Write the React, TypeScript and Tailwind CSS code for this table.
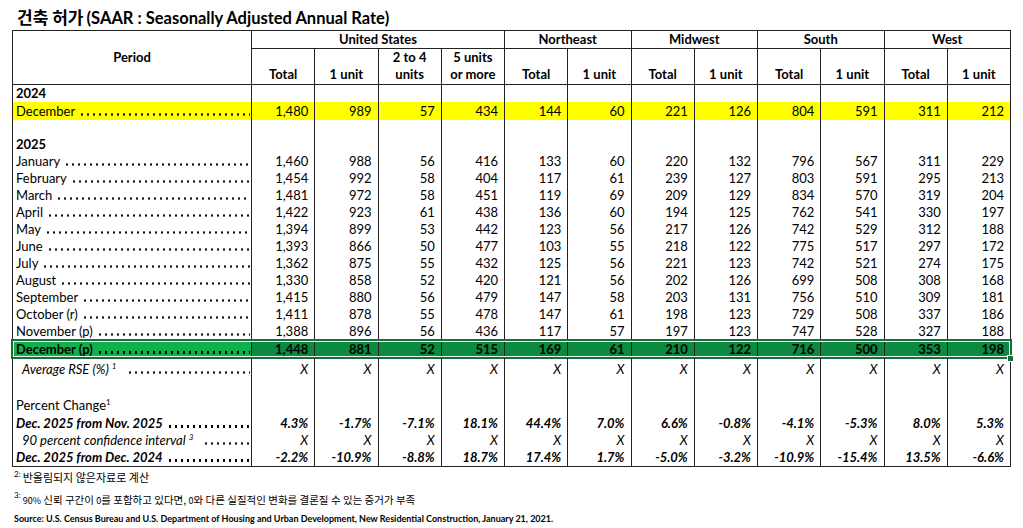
import React from "react";

type RowKind = "normal" | "yellow" | "green";

const months: [string, string[]][] = [
  ["January", ["1,460", "988", "56", "416", "133", "60", "220", "132", "796", "567", "311", "229"]],
  ["February", ["1,454", "992", "58", "404", "117", "61", "239", "127", "803", "591", "295", "213"]],
  ["March", ["1,481", "972", "58", "451", "119", "69", "209", "129", "834", "570", "319", "204"]],
  ["April", ["1,422", "923", "61", "438", "136", "60", "194", "125", "762", "541", "330", "197"]],
  ["May", ["1,394", "899", "53", "442", "123", "56", "217", "126", "742", "529", "312", "188"]],
  ["June", ["1,393", "866", "50", "477", "103", "55", "218", "122", "775", "517", "297", "172"]],
  ["July", ["1,362", "875", "55", "432", "125", "56", "221", "123", "742", "521", "274", "175"]],
  ["August", ["1,330", "858", "52", "420", "121", "56", "202", "126", "699", "508", "308", "168"]],
  ["September", ["1,415", "880", "56", "479", "147", "58", "203", "131", "756", "510", "309", "181"]],
  ["October (r)", ["1,411", "878", "55", "478", "147", "61", "198", "123", "729", "508", "337", "186"]],
  ["November (p)", ["1,388", "896", "56", "436", "117", "57", "197", "123", "747", "528", "327", "188"]],
];

const X12 = Array(12).fill("X");
const empty12 = Array(12).fill("");

function Dots({ bold = false }: { bold?: boolean }) {
  return (
    <span
      className={`flex-1 min-w-0 h-[3px] ml-[4px] bg-repeat-x bg-left ${
        bold
          ? "bg-[radial-gradient(circle,#000_1.2px,transparent_1.5px)] bg-[length:6px_3px]"
          : "bg-[radial-gradient(circle,#111_1px,transparent_1.3px)] bg-[length:6px_3px]"
      }`}
    />
  );
}

function Cells({
  values,
  cellClass = "",
  textClass = "",
}: {
  values: string[];
  cellClass?: string;
  textClass?: string;
}) {
  return (
    <div className="grid grid-cols-12 flex-1 h-full">
      {values.map((v, i) => (
        <div
          key={i}
          className={`border-l border-[#222] h-full flex items-center justify-end pr-[6px] ${cellClass} ${textClass}`}
        >
          {v}
        </div>
      ))}
    </div>
  );
}

function Row({
  h,
  label,
  values,
  kind = "normal",
  textClass = "",
}: {
  h: string;
  label: React.ReactNode;
  values: string[];
  kind?: RowKind;
  textClass?: string;
}) {
  const periodBg =
    kind === "yellow" ? "bg-[#ffff00]" : kind === "green" ? "bg-[#10b04c]" : "";
  const cellBg =
    kind === "yellow" ? "bg-[#ffff00]" : kind === "green" ? "bg-[#0b8a40]" : "";
  return (
    <div className={`flex ${h} relative`}>
      <div className={`w-[238px] shrink-0 h-full flex items-center pl-[3px] pr-[1px] ${periodBg}`}>
        {label}
      </div>
      <Cells values={values} cellClass={cellBg} textClass={textClass} />
      {kind === "green" && (
        <>
          <div className="absolute -left-[2px] -right-[2px] -top-[1px] -bottom-[1px] border-2 border-[#1d6b3c] shadow-[inset_0_0_0_1px_#e8f5ec] pointer-events-none" />
          <div className="absolute -right-[4px] -bottom-[4px] w-[7px] h-[7px] bg-[#1d6b3c] border border-white" />
        </>
      )}
    </div>
  );
}

function Label({
  text,
  className = "",
  bold = false,
}: {
  text: React.ReactNode;
  className?: string;
  bold?: boolean;
}) {
  return (
    <div className={`flex w-full items-baseline ${className}`}>
      <span className="whitespace-nowrap">{text}</span>
      <Dots bold={bold} />
    </div>
  );
}

export default function App() {
  const subHeads: React.ReactNode[] = [
    "Total",
    "1 unit",
    <>
      2 to 4
      <br />
      units
    </>,
    <>
      5 units
      <br />
      or more
    </>,
    "Total",
    "1 unit",
    "Total",
    "1 unit",
    "Total",
    "1 unit",
    "Total",
    "1 unit",
  ];
  const groups: [string, string][] = [
    ["United States", "col-span-4"],
    ["Northeast", "col-span-2"],
    ["Midwest", "col-span-2"],
    ["South", "col-span-2"],
    ["West", "col-span-2"],
  ];

  return (
    <div className="w-[1023px] h-[528px] bg-white text-black overflow-hidden font-[family-name:Lato,'Noto_Sans_CJK_KR',sans-serif] text-[13px] leading-none">
      {/* Title */}
      <div className="h-[30px] pl-[17px] pt-[8px] font-bold whitespace-nowrap leading-[18px]">
        <span className="font-[family-name:'Noto_Sans_CJK_KR',sans-serif] text-[17px]">건축 허가</span>{" "}
        <span className="text-[16.5px]">(SAAR : Seasonally Adjusted Annual Rate)</span>
      </div>

      {/* Table */}
      <div className="ml-[12px] w-[999px] border border-[#222]">
        {/* Header */}
        <div className="flex h-[54px] border-b border-[#222]">
          <div className="w-[238px] shrink-0 flex items-center justify-center font-bold">
            Period
          </div>
          <div className="flex-1 flex flex-col">
            <div className="grid grid-cols-12 h-[18px] border-b border-[#222]">
              {groups.map(([g, span]) => (
                <div
                  key={g}
                  className={`${span} border-l border-[#222] flex items-center justify-center font-bold`}
                >
                  {g}
                </div>
              ))}
            </div>
            <div className="grid grid-cols-12 flex-1">
              {subHeads.map((s, i) => (
                <div
                  key={i}
                  className="border-l border-[#222] flex flex-col justify-end items-center text-center font-bold leading-[17px] pb-[1px]"
                >
                  <div>{s}</div>
                </div>
              ))}
            </div>
          </div>
        </div>

        {/* Body */}
        <Row h="h-[17px]" label={<span className="font-bold">2024</span>} values={empty12} />
        <Row
          h="h-[18px]"
          kind="yellow"
          label={<Label text="December" />}
          values={["1,480", "989", "57", "434", "144", "60", "221", "126", "804", "591", "311", "212"]}
        />
        <Row h="h-[16px]" label={null} values={empty12} />
        <Row h="h-[17px]" label={<span className="font-bold">2025</span>} values={empty12} />
        {months.map(([m, v]) => (
          <Row key={m} h="h-[17px]" label={<Label text={m} />} values={v} />
        ))}
        <Row
          h="h-[18px]"
          kind="green"
          label={<Label text="December (p)" className="font-bold" bold />}
          values={["1,448", "881", "52", "515", "169", "61", "210", "122", "716", "500", "353", "198"]}
          textClass="font-bold"
        />
        <Row
          h="h-[22px]"
          label={
            <Label
              className="italic pl-[6px]"
              text={
                <>
                  Average RSE (%)<sup className="text-[8px] ml-[3px] -top-[5px]">1</sup>
                  <span className="inline-block w-[7px]" />
                </>
              }
            />
          }
          values={X12}
          textClass="italic"
        />
        <Row h="h-[16px]" label={null} values={empty12} />
        <Row
          h="h-[18px]"
          label={
            <span>
              Percent Change<sup className="text-[8px] -top-[5px]">1</sup>
            </span>
          }
          values={empty12}
        />
        <Row
          h="h-[18px]"
          label={<Label className="font-bold italic" bold text="Dec. 2025 from Nov. 2025" />}
          values={["4.3%", "-1.7%", "-7.1%", "18.1%", "44.4%", "7.0%", "6.6%", "-0.8%", "-4.1%", "-5.3%", "8.0%", "5.3%"]}
          textClass="font-bold italic"
        />
        <Row
          h="h-[16px]"
          label={
            <Label
              className="italic pl-[6px]"
              text={
                <>
                  90 percent confidence interval<sup className="text-[8px] ml-[3px] -top-[5px]">3</sup>
                  <span className="inline-block w-[6px]" />
                </>
              }
            />
          }
          values={X12}
          textClass="italic"
        />
        <Row
          h="h-[18px]"
          label={<Label className="font-bold italic" bold text="Dec. 2025 from Dec. 2024" />}
          values={["-2.2%", "-10.9%", "-8.8%", "18.7%", "17.4%", "1.7%", "-5.0%", "-3.2%", "-10.9%", "-15.4%", "13.5%", "-6.6%"]}
          textClass="font-bold italic"
        />
      </div>

      {/* Footnotes */}
      <div className="pl-[14px] pt-[3px] text-[11px] leading-[14px] whitespace-nowrap">
        <div className="flex items-start">
          <span className="text-[8px] leading-[8px] mr-[2px]">2:</span>
          <span className="font-[family-name:'Noto_Sans_CJK_KR',sans-serif]">반올림되지 않은자료로 계산</span>
        </div>
        <div className="flex items-start mt-[7px]">
          <span className="text-[8px] leading-[8px] mr-[2px]">3:</span>
          <span className="font-[family-name:'Noto_Sans_CJK_KR',sans-serif] pt-[2px] text-[10.5px]">
            <span className="text-[9px]">90%</span> 신뢰 구간이 <span className="text-[9px]">0</span>를 포함하고 있다면,{" "}
            <span className="text-[9px]">0</span>와 다른 실질적인 변화를 결론질 수 있는 증거가 부족
          </span>
        </div>
        <div className="mt-[5px] text-[9px] font-bold leading-[11px]">
          Source: U.S. Census Bureau and U.S. Department of Housing and Urban Development, New Residential
          Construction, January 21, 2021.
        </div>
      </div>
    </div>
  );
}
